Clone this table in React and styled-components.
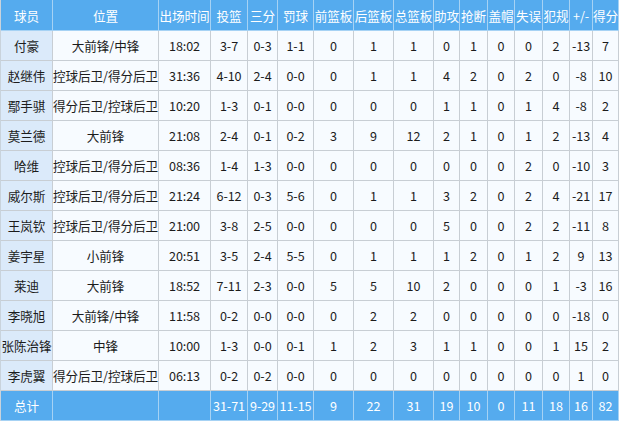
import React from "react";
import styled, { createGlobalStyle } from "styled-components";

const Global = createGlobalStyle`
  html, body { margin: 0; padding: 0; background: #ffffff; }
  body { font-family: "Noto Sans CJK SC", "Noto Sans", sans-serif; }
`;

const COLS = "52px 106px 52px 37px 30px 36px 40px 40px 40px 26px 28px 27px 28px 27px 23px 26px";

const Table = styled.div`
  width: 619px;
  display: flex;
  flex-direction: column;
  border-left: 1px solid #c9d3dc;
`;

const Row = styled.div`
  display: grid;
  grid-template-columns: ${COLS};
  height: ${(p) => p.$h || 30}px;
`;

const Cell = styled.div`
  box-sizing: border-box;
  display: flex;
  align-items: center;
  justify-content: center;
  white-space: nowrap;
  overflow: hidden;
  font-size: 12.6px;
  letter-spacing: -0.1px;
  border-right: 1px solid ${(p) => (p.$blue ? "#a6d2f4" : "#c8ced4")};
  border-bottom: 1px solid ${(p) => (p.$blue ? "#a6d2f4" : "#c8ced4")};
  background: ${(p) => (p.$blue ? "#55abee" : p.$first ? "#dbeafa" : "#f7fbff")};
  color: ${(p) => (p.$blue ? "#ffffff" : "#1c1c1c")};
`;

const headers = ["球员", "位置", "出场时间", "投篮", "三分", "罚球", "前篮板", "后篮板", "总篮板", "助攻", "抢断", "盖帽", "失误", "犯规", "+/-", "得分"];

const rows = [
  ["付豪", "大前锋/中锋", "18:02", "3-7", "0-3", "1-1", "0", "1", "1", "0", "1", "0", "0", "2", "-13", "7"],
  ["赵继伟", "控球后卫/得分后卫", "31:36", "4-10", "2-4", "0-0", "0", "1", "1", "4", "2", "0", "2", "0", "-8", "10"],
  ["鄢手骐", "得分后卫/控球后卫", "10:20", "1-3", "0-1", "0-0", "0", "0", "0", "1", "1", "0", "1", "4", "-8", "2"],
  ["莫兰德", "大前锋", "21:08", "2-4", "0-1", "0-2", "3", "9", "12", "2", "1", "0", "1", "2", "-13", "4"],
  ["哈维", "控球后卫/得分后卫", "08:36", "1-4", "1-3", "0-0", "0", "0", "0", "0", "0", "0", "2", "0", "-10", "3"],
  ["威尔斯", "控球后卫/得分后卫", "21:24", "6-12", "0-3", "5-6", "0", "1", "1", "3", "2", "0", "2", "4", "-21", "17"],
  ["王岚钦", "控球后卫/得分后卫", "21:00", "3-8", "2-5", "0-0", "0", "0", "0", "5", "0", "0", "2", "2", "-11", "8"],
  ["姜宇星", "小前锋", "20:51", "3-5", "2-4", "5-5", "0", "1", "1", "1", "2", "0", "1", "2", "9", "13"],
  ["莱迪", "大前锋", "18:52", "7-11", "2-3", "0-0", "5", "5", "10", "2", "0", "0", "0", "1", "-3", "16"],
  ["李晓旭", "大前锋/中锋", "11:58", "0-2", "0-0", "0-0", "0", "2", "2", "0", "0", "0", "0", "0", "-18", "0"],
  ["张陈治锋", "中锋", "10:00", "1-3", "0-0", "0-1", "1", "2", "3", "1", "1", "0", "0", "1", "15", "2"],
  ["李虎翼", "得分后卫/控球后卫", "06:13", "0-2", "0-2", "0-0", "0", "0", "0", "0", "0", "0", "0", "0", "1", "0"],
];

const totals = ["总计", "", "", "31-71", "9-29", "11-15", "9", "22", "31", "19", "10", "0", "11", "18", "16", "82"];

export default function App() {
  return (
    <>
      <Global />
      <Table>
        <Row $h={31}>
          {headers.map((h, i) => (
            <Cell key={i} $blue>{h}</Cell>
          ))}
        </Row>
        {rows.map((r, ri) => (
          <Row key={ri}>
            {r.map((v, i) => (
              <Cell key={i} $first={i === 0}>{v}</Cell>
            ))}
          </Row>
        ))}
        <Row>
          {totals.map((v, i) => (
            <Cell key={i} $blue>{v}</Cell>
          ))}
        </Row>
      </Table>
    </>
  );
}
